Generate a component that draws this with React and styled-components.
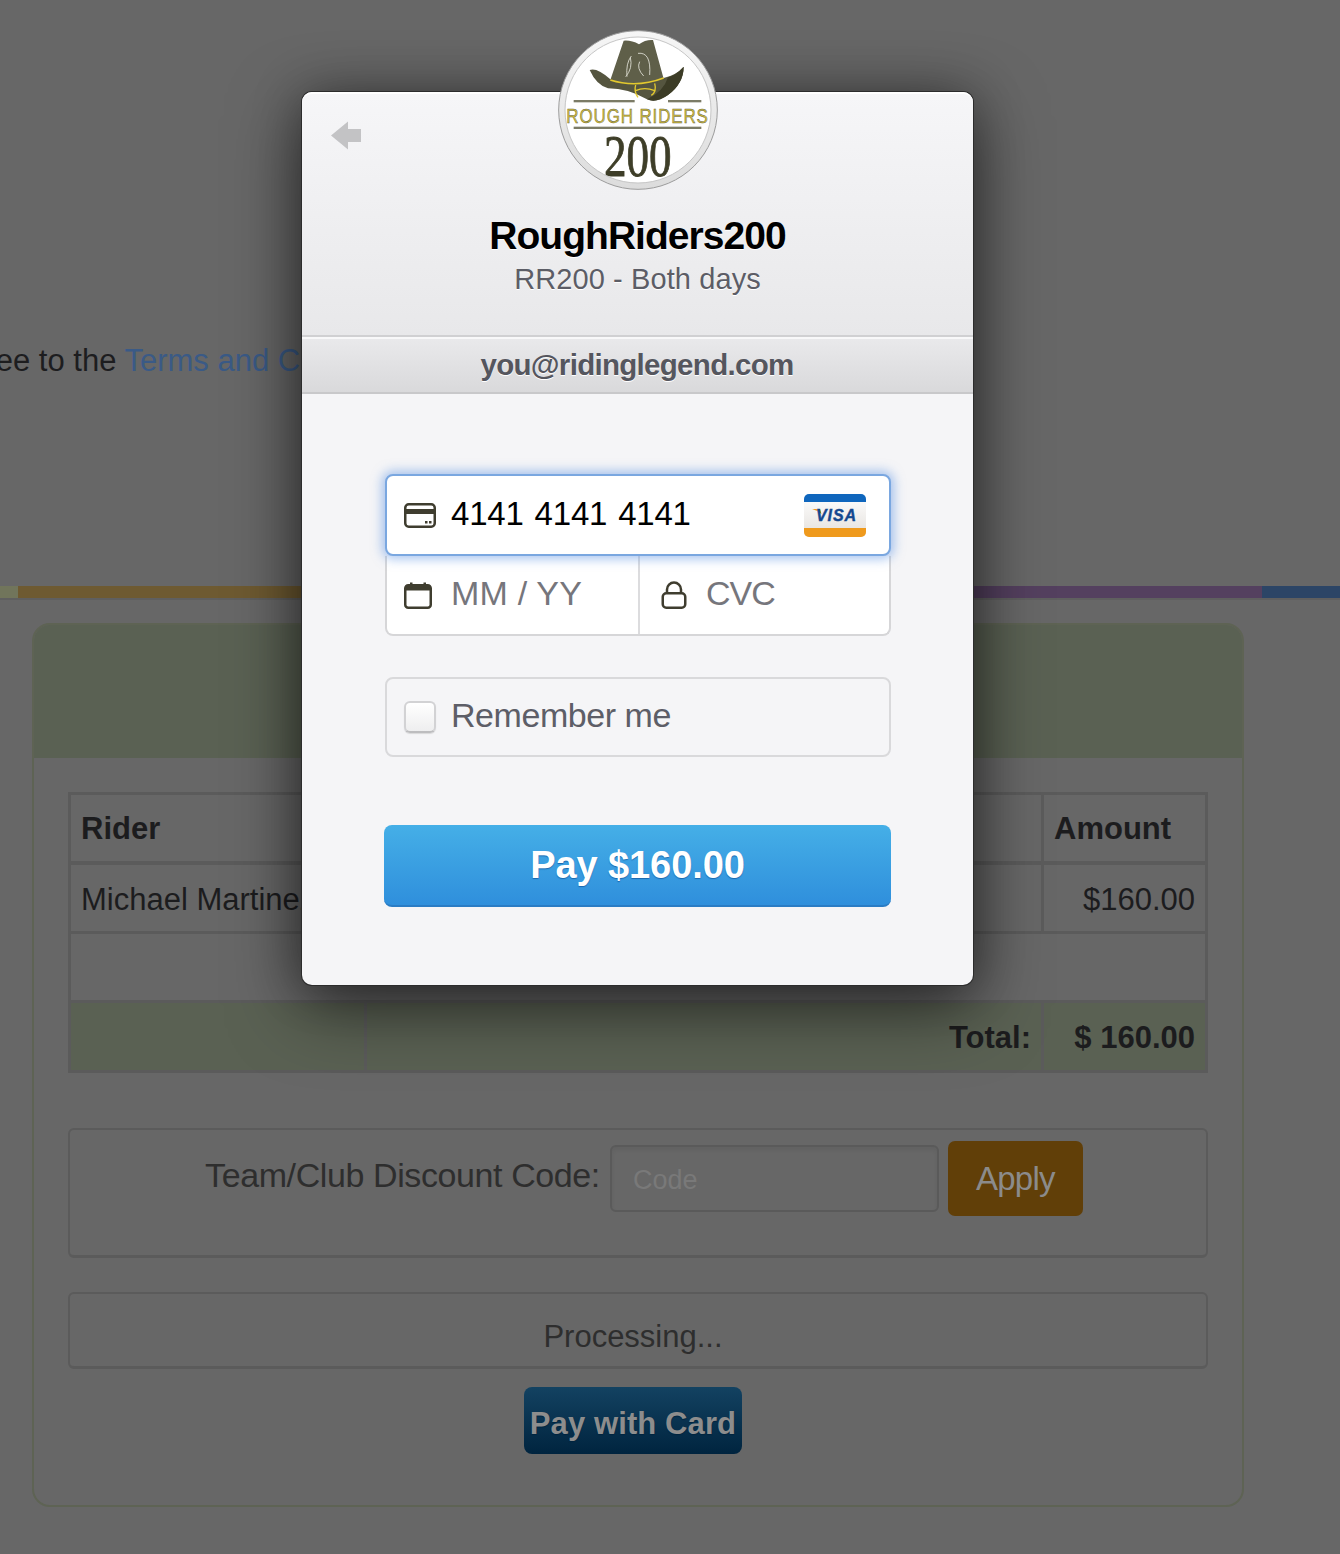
import React from 'react';
import styled, {createGlobalStyle} from 'styled-components';

const Global = createGlobalStyle`
html, body {
  margin: 0;
  padding: 0;
  background-color: #676767;
  font-family: "Liberation Sans", Arial, sans-serif;
}
`

const Page = styled.div`
position: relative;
width: 1340px;
height: 1554px;
overflow: hidden;
background-color: #676767;
color: #1c1c1e;
font-size: 31px;
`
const Terms = styled.div`
margin: 0 0 0 -110px;
padding-top: 343px;
height: 586px;
box-sizing: border-box;
line-height: 36px;
white-space: nowrap;
color: #1d1d1f;
`
const TermsLink = styled.span`
color: #3a5a86;
`
const Strip = styled.div`
display: flex;
height: 12px;
border-bottom: 2px solid #5f5f5f;
`
const StripPart = styled.div`
width: ${p => p.$w}px;
flex: ${p => p.$w ? 'none' : 1};
background-color: ${p => p.$c};
`
const Card = styled.div`
margin: 23px 0 0 32px;
width: 1212px;
height: 884px;
box-sizing: border-box;
border: 2px solid #5e6354;
border-radius: 18px;
overflow: hidden;
`
const CardHead = styled.div`
height: 133px;
background-color: #5a6153;
`
const CardBody = styled.div`
padding: 34px 34px 0;
`
const Table = styled.table`
width: 1137px;
table-layout: fixed;
border-collapse: collapse;
border: 3px solid #5b5b5b;
`
const Cell = styled.td`
height: ${p => p.$h || 70}px;
padding: ${p => p.$top || 4}px 10px 0;
box-sizing: border-box;
border: 3px solid #5b5b5b;
border-bottom-width: ${p => p.$head ? 4 : 3}px;
font-weight: ${p => p.$bold ? 'bold' : 'normal'};
text-align: ${p => p.$right ? 'right' : 'left'};
background-color: ${p => p.$green ? '#5a6153' : 'transparent'};
`
const Box = styled.div`
display: flex;
justify-content: center;
width: 1140px;
box-sizing: border-box;
border: 2px solid #5b5b5b;
border-bottom-width: 3px;
border-radius: 6px;
`
const DiscountBox = styled(Box)`
margin-top: 55px;
height: 130px;
padding: 11px 0 0 12px;
align-items: flex-start;
gap: 10px;
`
const DiscountLabel = styled.label`
margin-top: 14px;
font-size: 34px;
line-height: 40px;
color: #2e2e2e;
letter-spacing: -0.4px;
`
const CodeInput = styled.div`
display: flex;
align-items: center;
margin-top: 4px;
margin-right: -1px;
width: 329px;
height: 67px;
padding: 3px 0 0 21px;
box-sizing: border-box;
border: 2px solid #5a5a5a;
border-radius: 6px;
color: #797979;
font-size: 27px;
box-shadow: inset 0 3px 4px rgba(0,0,0,.06);
`
const ApplyButton = styled.div`
display: flex;
align-items: center;
justify-content: center;
width: 135px;
height: 75px;
border-radius: 7px;
background-color: #613f08;
color: #8b8b8b;
font-size: 33px;
letter-spacing: -0.7px;
`
const ProcessingBox = styled(Box)`
margin-top: 34px;
height: 77px;
padding: 25px 10px 0 0;
color: #2e2e2e;
`
const PayWithCard = styled.div`
display: flex;
align-items: center;
justify-content: center;
margin: 18px 0 0 456px;
width: 218px;
height: 67px;
padding-top: 6px;
box-sizing: border-box;
border-radius: 8px;
background: linear-gradient(#134261, #00243f);
color: #8d8d8d;
font-size: 31px;
font-weight: bold;
letter-spacing: 0.1px;
text-shadow: 0 1px 1px #00243f;
`

const Modal = styled.div`
position: absolute;
left: 302px;
top: 92px;
width: 671px;
height: 893px;
border-radius: 10px;
background-color: #f5f5f7;
box-shadow: 0 0 0 1px #2c2c2c, 0 22px 70px rgba(0,0,0,.55), 0 0 50px rgba(0,0,0,.3);
`
const ModalHead = styled.div`
display: flex;
flex-flow: column;
align-items: center;
height: 245px;
padding-top: 119px;
box-sizing: border-box;
border-radius: 10px 10px 0 0;
border-top: 2px solid #fff;
border-bottom: 2px solid #d0d0d2;
background: linear-gradient(#f6f6f8, #e8e8ea);
`
const BackArrow = styled.svg`
position: absolute;
left: 29px;
top: 29px;
`
const LogoWrap = styled.svg`
position: absolute;
left: 256px;
top: -62px;
`
const Title = styled.div`
font-size: 39px;
line-height: 46px;
font-weight: bold;
color: #000;
letter-spacing: -0.95px;
text-shadow: 0 1px 0 #fff;
`
const Subtitle = styled.div`
margin-top: 2px;
font-size: 29px;
line-height: 36px;
color: #5c5d66;
letter-spacing: 0.1px;
text-shadow: 0 1px 0 #fff;
`
const EmailBar = styled.div`
display: flex;
align-items: center;
justify-content: center;
height: 57px;
padding: 0 1px 2px 0;
box-sizing: border-box;
border-top: 2px solid #f8f8f9;
border-bottom: 2px solid #c8c8ca;
background: linear-gradient(#e9e9eb, #d9d9db);
font-size: 29.5px;
font-weight: bold;
color: #55565e;
letter-spacing: -0.7px;
text-shadow: 0 1px 0 #fff;
`
const ModalBody = styled.div`
display: flex;
flex-flow: column;
padding: 80px 82px 0;
`
const FieldGroup = styled.div`
position: relative;
width: 506px;
margin-left: 1px;
`
const CardRow = styled.div`
position: relative;
display: flex;
align-items: center;
height: 82px;
padding: 0 22px 0 17px;
box-sizing: border-box;
border: 2px solid #7aa7e0;
border-radius: 8px;
background-color: #fff;
box-shadow: 0 0 11px 3px rgba(96,150,228,.55);
z-index: 1;
`
const SplitRow = styled.div`
display: flex;
height: 80px;
box-sizing: border-box;
border: 2px solid #d6d6d8;
border-top: none;
border-radius: 0 0 8px 8px;
background-color: #fff;
`
const SplitCell = styled.div`
display: flex;
flex: ${p => p.$fixed ? 'none' : 1};
width: ${p => p.$fixed ? `${p.$fixed}px` : 'auto'};
align-items: center;
padding-left: ${p => p.$pad}px;
box-sizing: border-box;
border-left: ${p => p.$divider ? '2px solid #dcdcde' : 'none'};
`
const IconSlot = styled.div`
display: flex;
align-items: center;
width: ${p => p.$w}px;
flex: none;
`
const CardNumber = styled.div`
flex: 1;
margin-top: -2px;
font-size: 33px;
color: #000;
letter-spacing: -0.2px;
word-spacing: 2px;
`
const VisaSlot = styled.div`
display: flex;
margin-top: 2px;
`
const Placeholder = styled.div`
margin-top: -4px;
font-size: 34px;
color: #76767c;
letter-spacing: ${p => p.$ls}px;
`
const RememberRow = styled.div`
display: flex;
align-items: center;
margin: 41px 0 0 1px;
width: 506px;
height: 80px;
padding-left: 17px;
box-sizing: border-box;
border: 2px solid #d9d9db;
border-radius: 8px;
`
const Check = styled.div`
width: 32px;
height: 32px;
margin-right: 15px;
box-sizing: border-box;
border: 2px solid #d2d2d4;
border-bottom-color: #bdbdbf;
border-radius: 6px;
background: linear-gradient(#fff, #eeeeef);
box-shadow: 0 1px 1px rgba(0,0,0,.12);
`
const RememberText = styled.div`
margin-top: -3px;
font-size: 34px;
color: #5d5e67;
letter-spacing: -0.45px;
`
const PayButton = styled.div`
display: flex;
align-items: center;
justify-content: center;
margin-top: 68px;
width: 507px;
height: 82px;
box-sizing: border-box;
border-bottom: 2px solid #2a7cc4;
border-radius: 8px;
background: linear-gradient(#45afe7, #2f8fdc);
color: #fff;
font-size: 38px;
font-weight: bold;
letter-spacing: -0.1px;
text-shadow: 0 1px 1px rgba(20,90,160,.8);
`

const Logo = () => (
    <LogoWrap width="160" height="160" viewBox="55 30 480 480">
        <defs>
            <clipPath id="inner"><circle cx="295" cy="270" r="217"/></clipPath>
            <linearGradient id="ring" x1="0" y1="0" x2="0" y2="1">
                <stop offset="0" stopColor="#f6f6f6"/>
                <stop offset="1" stopColor="#dcdcdc"/>
            </linearGradient>
        </defs>
        <circle cx="295" cy="270" r="238" fill="url(#ring)" stroke="#9c9c9c" strokeWidth="3"/>
        <circle cx="295" cy="270" r="219" fill="#fff" stroke="#c6c6c6" strokeWidth="3"/>
        <g clipPath="url(#inner)">
            <path d="M212 180 L252 62 Q275 60 298 73 Q318 58 340 60 L372 176 Q290 205 212 180Z" fill="#5f5f49"/>
            <path d="M150 150 Q172 142 212 178 Q290 205 372 174 Q410 165 432 140 Q432 190 385 225 Q350 250 322 238 Q265 205 205 205 Q170 195 150 150Z" fill="#55553f"/>
            <path d="M432 140 Q432 190 385 225 Q350 250 322 238 Q372 215 385 172 Q410 165 432 140Z" fill="#3c3c26"/>
            <path d="M212 180 Q290 205 372 174" fill="none" stroke="#e3c92e" strokeWidth="5"/>
            <path d="M288 195 Q282 215 295 232 M345 190 Q352 215 335 226 M288 212 Q315 200 345 212" fill="none" stroke="#e3c92e" strokeWidth="4"/>
            <path d="M275 108 Q258 130 262 170 M272 112 Q280 145 258 170 M295 100 Q335 95 330 165 M300 125 Q290 145 312 168" fill="none" stroke="#d0d0c4" strokeWidth="3"/>
            <rect x="102" y="240" width="183" height="7" fill="#7b7b66"/>
            <rect x="385" y="240" width="100" height="7" fill="#7b7b66"/>
            <rect x="102" y="320" width="383" height="7" fill="#7b7b66"/>
            <text transform="translate(193 468) scale(1 1.8)" fontFamily="'Liberation Serif', serif" fontSize="100" textLength="203" lengthAdjust="spacingAndGlyphs" fill="#3e3e28" stroke="#3e3e28" strokeWidth="1.5">200</text>
        </g>
        <text transform="translate(80 310) scale(.82 1)" fontFamily="'Liberation Sans', sans-serif" fontSize="62" textLength="518" lengthAdjust="spacing" fill="#d2bd3a" stroke="#5f5f45" strokeWidth="1.4">ROUGH RIDERS</text>
    </LogoWrap>
)

const CardIcon = () => (
    <svg width="32" height="25" viewBox="0 0 32 25">
        <rect x="1.25" y="1.25" width="29.5" height="22.5" rx="3.5" fill="none" stroke="#3f3d2f" strokeWidth="2.5"/>
        <rect x="1" y="6" width="30" height="5" fill="#3f3d2f"/>
        <rect x="21" y="18" width="2.5" height="2.5" fill="#3f3d2f"/>
        <rect x="25" y="18" width="2.5" height="2.5" fill="#3f3d2f"/>
    </svg>
)

const CalendarIcon = () => (
    <svg width="28" height="27" viewBox="0 0 28 27">
        <rect x="1.25" y="3.25" width="25.5" height="22.5" rx="3" fill="none" stroke="#3f3d2f" strokeWidth="2.5"/>
        <path d="M2 4 H26 V8.5 H2Z" fill="#3f3d2f"/>
        <rect x="6" y="0.5" width="2.5" height="5" fill="#3f3d2f"/>
        <rect x="19.5" y="0.5" width="2.5" height="5" fill="#3f3d2f"/>
    </svg>
)

const LockIcon = () => (
    <svg width="26" height="28" viewBox="0 0 26 28">
        <rect x="1.75" y="12.25" width="22.5" height="14.5" rx="3.5" fill="none" stroke="#3f3d2f" strokeWidth="2.5"/>
        <path d="M6 12 V8.5 A7 7 0 0 1 20 8.5 V12" fill="none" stroke="#3f3d2f" strokeWidth="2.5"/>
    </svg>
)

const VisaIcon = () => (
    <svg width="64" height="46" viewBox="0 0 64 46">
        <defs>
            <linearGradient id="visaBg" x1="0" y1="0" x2="0" y2="1">
                <stop offset="0" stopColor="#ffffff"/>
                <stop offset="1" stopColor="#e4e0dc"/>
            </linearGradient>
        </defs>
        <rect x="1" y="1" width="62" height="43" rx="5" fill="url(#visaBg)"/>
        <path d="M1 9 V6 A5 5 0 0 1 6 1 H58 A5 5 0 0 1 63 6 V9Z" fill="#0f66bd"/>
        <path d="M1 35 H63 V39 A5 5 0 0 1 58 44 H6 A5 5 0 0 1 1 39Z" fill="#ef9a1d"/>
        <path d="M9 16 H17 L18.5 21 Q15 17.5 9 16Z" fill="#ef9a1d"/>
        <text x="13" y="28" fontFamily="'Liberation Sans', sans-serif" fontSize="16" fontWeight="bold" fontStyle="italic" fill="#14488f" stroke="#14488f" strokeWidth="0.4" textLength="40" lengthAdjust="spacing">VISA</text>
    </svg>
)

const App = () => (
    <Page>
        <Global/>
        <Terms>You agree to the <TermsLink>Terms and Conditions</TermsLink></Terms>
        <Strip>
            <StripPart $w={18} $c="#71755b"/>
            <StripPart $w={420} $c="#6e5a31"/>
            <StripPart $c="#54405f"/>
            <StripPart $w={78} $c="#2c4566"/>
        </Strip>
        <Card>
            <CardHead/>
            <CardBody>
                <Table>
                    <colgroup>
                        <col width="296"/>
                        <col width="677"/>
                        <col width="164"/>
                    </colgroup>
                    <tbody>
                        <tr>
                            <Cell $bold $head $h={69} $top={2}>Rider</Cell>
                            <Cell $head $h={69} $top={2}/>
                            <Cell $bold $head $h={69} $top={2}>Amount</Cell>
                        </tr>
                        <tr>
                            <Cell colSpan={2}>Michael Martinez</Cell>
                            <Cell $right>$160.00</Cell>
                        </tr>
                        <tr>
                            <Cell colSpan={3} $h={69}/>
                        </tr>
                        <tr>
                            <Cell $green $top={2}/>
                            <Cell $green $bold $right $top={2}>Total:</Cell>
                            <Cell $green $bold $right $top={2}>$ 160.00</Cell>
                        </tr>
                    </tbody>
                </Table>
                <DiscountBox>
                    <DiscountLabel>Team/Club Discount Code:</DiscountLabel>
                    <CodeInput>Code</CodeInput>
                    <ApplyButton>Apply</ApplyButton>
                </DiscountBox>
                <ProcessingBox>Processing...</ProcessingBox>
                <PayWithCard>Pay with Card</PayWithCard>
            </CardBody>
        </Card>
        <Modal>
            <Logo/>
            <BackArrow width="31" height="29" viewBox="0 0 31 29">
                <path d="M0 14.5 L17 0.5 V8 H30 V21 H17 V28.5Z" fill="#c3c3c5"/>
            </BackArrow>
            <ModalHead>
                <Title>RoughRiders200</Title>
                <Subtitle>RR200 - Both days</Subtitle>
            </ModalHead>
            <EmailBar>you@ridinglegend.com</EmailBar>
            <ModalBody>
                <FieldGroup>
                    <CardRow>
                        <IconSlot $w={47}><CardIcon/></IconSlot>
                        <CardNumber>4141 4141 4141</CardNumber>
                        <VisaSlot><VisaIcon/></VisaSlot>
                    </CardRow>
                    <SplitRow>
                        <SplitCell $pad={17} $fixed={251}>
                            <IconSlot $w={47}><CalendarIcon/></IconSlot>
                            <Placeholder $ls={0.2}>MM / YY</Placeholder>
                        </SplitCell>
                        <SplitCell $divider $pad={21}>
                            <IconSlot $w={45}><LockIcon/></IconSlot>
                            <Placeholder $ls={-1}>CVC</Placeholder>
                        </SplitCell>
                    </SplitRow>
                </FieldGroup>
                <RememberRow>
                    <Check/>
                    <RememberText>Remember me</RememberText>
                </RememberRow>
                <PayButton>Pay $160.00</PayButton>
            </ModalBody>
        </Modal>
    </Page>
);

export default App;
